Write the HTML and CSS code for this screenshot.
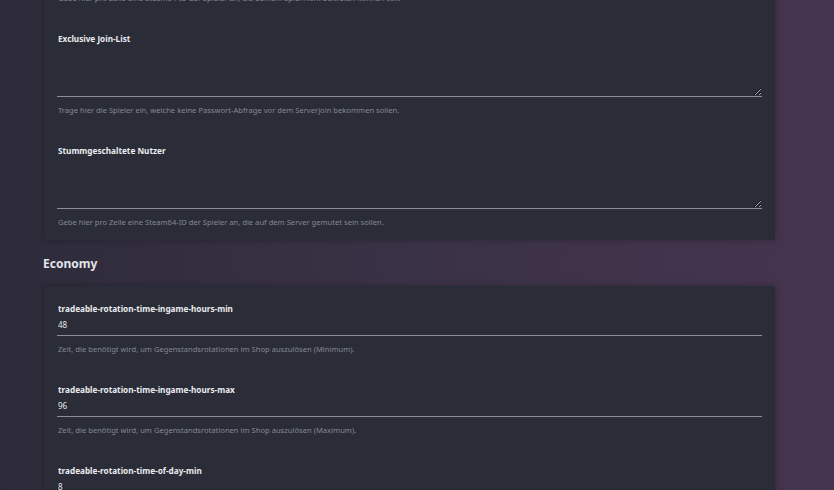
FILE: index.html
```html
<!DOCTYPE html>
<html lang="de">
<head>
    <meta charset="UTF-8">
    <meta name="viewport" content="width=device-width, initial-scale=1.0">
    <title>Server Einstellungen</title>
    <link rel="stylesheet" href="styles.css">
</head>
<body>
    <div class="page">
        <div class="card">
            <p class="hint">Gebe hier pro Zeile eine Steam64-ID der Spieler an, die deinem Spiel nicht beitreten können soll.</p>

            <div class="field">
                <label>Exclusive Join-List</label>
                <textarea class="form-area"></textarea>
                <p class="hint">Trage hier die Spieler ein, welche keine Passwort-Abfrage vor dem Serverjoin bekommen sollen.</p>
            </div>

            <div class="field">
                <label>Stummgeschaltete Nutzer</label>
                <textarea class="form-area"></textarea>
                <p class="hint">Gebe hier pro Zeile eine Steam64-ID der Spieler an, die auf dem Server gemutet sein sollen.</p>
            </div>
        </div>

        <h2 class="section-title">Economy</h2>

        <div class="card">
            <div class="field first">
                <label>tradeable-rotation-time-ingame-hours-min</label>
                <input type="text" class="form-input" value="48">
                <p class="hint">Zeit, die benötigt wird, um Gegenstandsrotationen im Shop auszulösen (Minimum).</p>
            </div>

            <div class="field">
                <label>tradeable-rotation-time-ingame-hours-max</label>
                <input type="text" class="form-input" value="96">
                <p class="hint">Zeit, die benötigt wird, um Gegenstandsrotationen im Shop auszulösen (Maximum).</p>
            </div>

            <div class="field">
                <label>tradeable-rotation-time-of-day-min</label>
                <input type="text" class="form-input" value="8">
                <p class="hint">Tageszeit, ab der Gegenstandsrotationen im Shop ausgelöst werden können (Minimum).</p>
            </div>
        </div>
    </div>
</body>
</html>
```

FILE: styles.css
```css
* {
    margin: 0;
    padding: 0;
    box-sizing: border-box;
}

html, body {
    height: 100%;
    overflow: hidden;
}

body {
    font-family: "Noto Sans", "Open Sans", sans-serif;
    background: linear-gradient(90deg, #2d2b3a 0%, #3a3246 50%, #46344f 100%);
    color: #e6e6ea;
}

.page {
    width: 731px;
    margin: -25px 0 0 44px;
}

.card {
    background: #2a2d37;
    padding: 17px 13px 12px 13px;
    box-shadow: 0 0 6px rgba(0,0,0,0.25);
}

.field {
    margin-top: 29px;
}

.field.first {
    margin-top: 0;
}

.field label {
    display: block;
    font-size: 8.2px;
    font-weight: 700;
    line-height: 12px;
    padding-left: 1px;
    color: #ebebef;
}

.hint {
    font-size: 7.6px;
    line-height: 12px;
    color: #848793;
    padding-left: 1px;
}

.form-area {
    display: block;
    width: 100%;
    height: 48px;
    margin: 4px 0 7px;
    background: transparent;
    border: none;
    border-bottom: 1px solid #8b8e98;
    color: #e6e6ea;
    color-scheme: dark;
    font-family: inherit;
    font-size: 8px;
    outline: none;
}

.form-input {
    display: block;
    width: 100%;
    margin: 3px 0 7px;
    padding: 0 1px 5px;
    height: 18px;
    background: transparent;
    border: none;
    border-bottom: 1px solid #8b8e98;
    color: #e6e6ea;
    font-family: inherit;
    font-size: 8px;
    line-height: 12px;
    outline: none;
}

.section-title {
    font-size: 12px;
    font-weight: 700;
    color: #e4e4ea;
    line-height: 18px;
    margin: 15px 0 13px -1px;
}
```
